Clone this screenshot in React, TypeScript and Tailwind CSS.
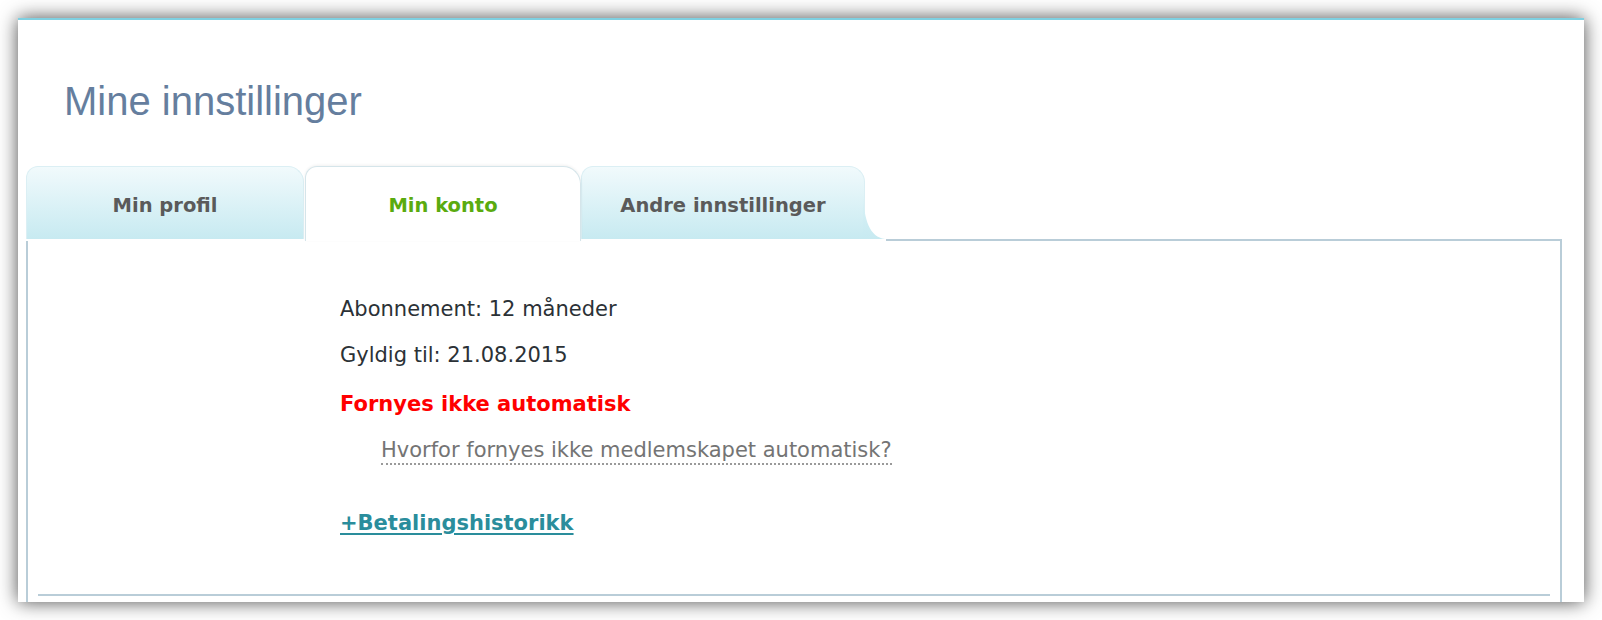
import React from "react";

function Flare() {
  // the little outward curve at the foot of the last tab
  return (
    <svg className="absolute bottom-0 right-[-21px]" width="22" height="46" viewBox="0 0 22 46">
      <defs>
        <linearGradient id="flare" x1="0" y1="0" x2="0" y2="1">
          <stop offset="0" stopColor="#dcf2f7" />
          <stop offset="1" stopColor="#c7eaf1" />
        </linearGradient>
      </defs>
      <path d="M0 0 C1 28 7 44 22 46 L0 46 Z" fill="url(#flare)" />
    </svg>
  );
}

export default function App() {
  return (
    <div className="min-h-[620px] bg-white p-[18px]">
      <div className="flex h-[584px] flex-col border-t-2 border-[#7fd0e1] bg-white shadow-[0_0_18px_rgba(0,0,0,0.7)]">
        <h1 className="pl-[46px] pt-[58px] font-['Liberation_Sans',Arial,sans-serif] text-[40px] leading-[46px] font-normal text-[#657e9e]">
          Mine innstillinger
        </h1>

        <div className="ml-[8px] mr-[22px] mt-[42px] flex flex-1 flex-col font-['DejaVu_Sans',Verdana,sans-serif]">
          {/* tab bar */}
          <div className="flex h-[75px] items-start">
            <div className="relative z-0 flex h-[73px] w-[278px] justify-center rounded-tl-[12px] rounded-tr-[16px] border border-b-0 border-[#dbeff4] bg-linear-to-b from-[#f1fafc] to-[#c7eaf1] pt-[27px] text-[19.5px] leading-[23px] font-bold text-[#5a5a5a]">
              Min profil
            </div>
            <div className="relative z-10 ml-px flex h-[75px] w-[276px] justify-center rounded-tl-[12px] rounded-tr-[18px] border border-b-0 border-[#d5e5ea] bg-white pt-[27px] text-[19.5px] leading-[23px] font-bold text-[#5aab0f] shadow-[0_-1px_3px_rgba(0,0,0,0.06)]">
              Min konto
            </div>
            <div className="relative z-0 mr-[21px] flex h-[73px] w-[284px] justify-center rounded-tl-[12px] rounded-tr-[16px] border border-b-0 border-[#dbeff4] bg-linear-to-b from-[#f1fafc] to-[#c7eaf1] pt-[27px] text-[19.5px] leading-[23px] font-bold text-[#5a5a5a]">
              Andre innstillinger
              <Flare />
            </div>
            <div className="h-[75px] flex-1 border-b-2 border-[#b9cdd8]" />
          </div>

          {/* panel body */}
          <div className="flex flex-1 flex-col border-x-2 border-[#b9cdd8]">
            <div className="flex flex-1 flex-col items-start pl-[312px] pt-[56px] text-[21px] leading-[24px]">
              <p className="text-[#2b3136]">Abonnement: 12 måneder</p>
              <p className="mt-[22px] text-[#2b3136]">Gyldig til: 21.08.2015</p>
              <p className="mt-[25px] font-bold text-[#ff0000]">Fornyes ikke automatisk</p>
              <a className="mt-[22px] ml-[41px] border-b-2 border-dotted border-[#9a9a9a] pb-[1px] text-[#747474]">
                Hvorfor fornyes ikke medlemskapet automatisk?
              </a>
              <a className="mt-[46px] font-bold text-[#2a8d9c] underline decoration-2 underline-offset-[3px]">
                +Betalingshistorikk
              </a>
            </div>
            <div className="mx-[10px] mb-[6px] h-[2px] bg-[#b9cdd8]" />
          </div>
        </div>
      </div>
    </div>
  );
}
